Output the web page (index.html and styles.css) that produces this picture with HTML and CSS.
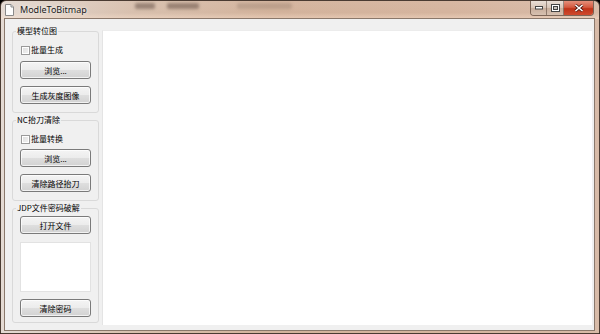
FILE: index.html
```html
<!DOCTYPE html>
<html lang="zh-CN">
<head>
    <meta charset="UTF-8">
    <meta name="viewport" content="width=device-width, initial-scale=1.0">
    <title>ModleToBitmap</title>
    <link rel="stylesheet" href="styles.css">
</head>
<body>

<div class="window">
    <!-- 标题栏 -->
    <div class="titlebar">
        <span class="app-icon">
            <svg width="11" height="12" viewBox="0 0 11 12">
                <path d="M1.5 0.5h5.5l2.5 2.5v8.5h-8z" fill="#fdfdfd" stroke="#8a8a8a"/>
                <path d="M7 0.5v2.5h2.5" fill="#e4e4e4" stroke="#8a8a8a"/>
            </svg>
        </span>
        <span class="title">ModleToBitmap</span>
        <span class="ghost ghost-a"></span>
        <span class="ghost ghost-b"></span>
        <span class="ghost ghost-c"></span>
        <div class="caption-buttons">
            <span class="cap-btn cap-min">
                <svg width="8" height="4" viewBox="0 0 8 4"><rect x="0.5" y="0.5" width="7" height="2.5" fill="#fff" stroke="#444"/></svg>
            </span>
            <span class="cap-btn cap-max">
                <svg width="9" height="8" viewBox="0 0 9 8"><rect x="0.5" y="0.5" width="8" height="7" fill="#fff" stroke="#444"/><rect x="2.5" y="2.5" width="4" height="3" fill="#c9c3bd" stroke="#444"/></svg>
            </span>
            <span class="cap-btn cap-close">
                <svg width="10" height="8" viewBox="0 0 10 8"><path d="M1.5 1l7 6M8.5 1l-7 6" stroke="#4a1a14" stroke-width="3"/><path d="M1.5 1l7 6M8.5 1l-7 6" stroke="#fff" stroke-width="1.6"/></svg>
            </span>
        </div>
    </div>

    <!-- 客户区 -->
    <div class="client">
        <div class="sidebar">
            <fieldset class="group">
                <legend>模型转位图</legend>
                <div class="group-body body-model">
                    <label class="check"><span class="check-box"></span>批量生成</label>
                    <button class="btn btn-first">浏览...</button>
                    <button class="btn">生成灰度图像</button>
                </div>
            </fieldset>

            <fieldset class="group">
                <legend>NC抬刀清除</legend>
                <div class="group-body body-nc">
                    <label class="check"><span class="check-box"></span>批量转换</label>
                    <button class="btn btn-first-nc">浏览...</button>
                    <button class="btn">清除路径抬刀</button>
                </div>
            </fieldset>

            <fieldset class="group">
                <legend>JDP文件密码破解</legend>
                <div class="group-body body-jdp">
                    <button class="btn">打开文件</button>
                    <textarea class="textbox" readonly></textarea>
                    <button class="btn">清除密码</button>
                </div>
            </fieldset>
        </div>

        <div class="canvas"></div>
    </div>
</div>

</body>
</html>
```

FILE: styles.css
```css
body {
    margin: 0;
    font-family: "Noto Sans CJK SC", "Noto Sans", sans-serif;
    background: #000;
}
.window {
    box-sizing: border-box;
    width: 600px;
    height: 334px;
    border: 1px solid #4a3b32;
    border-radius: 6px 6px 0 0;
    background: linear-gradient(90deg, #e4dad3 0%, #d8c0ae 22%, #d3b39c 45%, #d5b49e 75%, #d8bba8 100%);
    display: flex;
    flex-direction: column;
    overflow: hidden;
}
.titlebar {
    height: 18px;
    display: flex;
    align-items: flex-start;
    padding-left: 3px;
    background: linear-gradient(180deg, rgba(255,255,255,0.05) 0%, rgba(255,255,255,0) 65%, rgba(255,230,210,0.45) 100%);
}
.app-icon {
    margin-top: 3px;
    width: 11px;
    height: 12px;
}
.app-icon svg {
    display: block;
}
.title {
    margin-left: 5px;
    margin-top: 2px;
    font-family: "Noto Sans", sans-serif;
    font-size: 9px;
    line-height: 13px;
    color: #1a1a1a;
    text-shadow: 0 0 4px #f4eee9, 0 0 2px #f4eee9;
}
.ghost {
    height: 6px;
    margin-top: 2px;
    background: rgba(80, 60, 50, 0.45);
    filter: blur(1.6px);
    border-radius: 2px;
}
.ghost-a {
    width: 20px;
    margin-left: 48px;
}
.ghost-b {
    width: 32px;
    margin-left: 12px;
}
.ghost-c {
    width: 55px;
    margin-left: 38px;
    background: rgba(80, 60, 50, 0.18);
}
.caption-buttons {
    margin-left: auto;
    margin-right: 5px;
    display: flex;
    height: 14px;
    border: 1px solid rgba(60, 40, 30, 0.6);
    border-top: none;
    border-radius: 0 0 4px 4px;
    overflow: hidden;
}
.cap-btn {
    display: flex;
    align-items: center;
    justify-content: center;
    height: 14px;
}
.cap-btn svg {
    display: block;
}
.cap-min, .cap-max {
    width: 15px;
    background: linear-gradient(180deg, #eadfd7 0%, #d8c4b6 50%, #c8ae9c 51%, #d6c0b0 100%);
    border-right: 1px solid rgba(60, 40, 30, 0.45);
}
.cap-max {
    width: 16px;
}
.cap-close {
    width: 29px;
    background: linear-gradient(180deg, #e48f7a 0%, #d45a40 45%, #bf3318 55%, #cf4a2e 100%);
}
.client {
    flex: 1;
    margin: 0 5px 3px 4px;
    background: #f0f0f0;
    box-shadow: 0 0 0 1px #8a786b;
    display: flex;
    padding: 6px 2px 5px 7px;
    gap: 3px;
}
.sidebar {
    width: 87px;
    display: flex;
    flex-direction: column;
    gap: 1px;
}
.group {
    margin: 0;
    padding: 0;
    border: 1px solid #d9d9d9;
    border-radius: 3px;
    min-width: 0;
}
.group legend {
    margin-left: 3px;
    padding: 0 1px;
    font-size: 8px;
    line-height: 12px;
    color: #000;
}
.group-body {
    display: flex;
    flex-direction: column;
    padding: 0 7px;
}
.body-model {
    padding-top: 8px;
    padding-bottom: 8px;
    gap: 7px;
}
.body-nc {
    padding-top: 8px;
    padding-bottom: 8px;
    gap: 7px;
}
.body-jdp {
    padding-top: 2px;
    padding-bottom: 5px;
    gap: 7px;
}
.check {
    display: flex;
    align-items: center;
    height: 10px;
    font-size: 8px;
    line-height: 10px;
    padding-left: 1px;
}
.check-box {
    box-sizing: border-box;
    width: 9px;
    height: 9px;
    margin-right: 1px;
    border: 1px solid #9a9a9a;
    background: linear-gradient(135deg, #dcdcdc 0%, #f4f4f4 100%);
    box-shadow: inset 0 0 0 1px #fff;
}
.btn-first {
    margin-top: -1px;
}
.btn-first-nc {
    margin-top: -2px;
}
.btn {
    box-sizing: border-box;
    height: 18px;
    padding: 0;
    font-family: "Noto Sans CJK SC", sans-serif;
    font-size: 8px;
    color: #000;
    border: 1px solid #7a7a7a;
    border-radius: 3px;
    background: linear-gradient(180deg, #f4f4f4 0%, #ececec 48%, #dedede 52%, #d2d2d2 100%);
    box-shadow: inset 0 0 0 1px rgba(255, 255, 255, 0.7);
}
.textbox {
    box-sizing: border-box;
    height: 50px;
    margin-top: 1px;
    border: 1px solid #e2e2e2;
    background: #fff;
    resize: none;
    outline: none;
}
.canvas {
    flex: 1;
    margin-top: 5px;
    background: #fff;
    border-left: 1px solid #e4e4e4;
    border-top: 1px solid #ececec;
}
```
